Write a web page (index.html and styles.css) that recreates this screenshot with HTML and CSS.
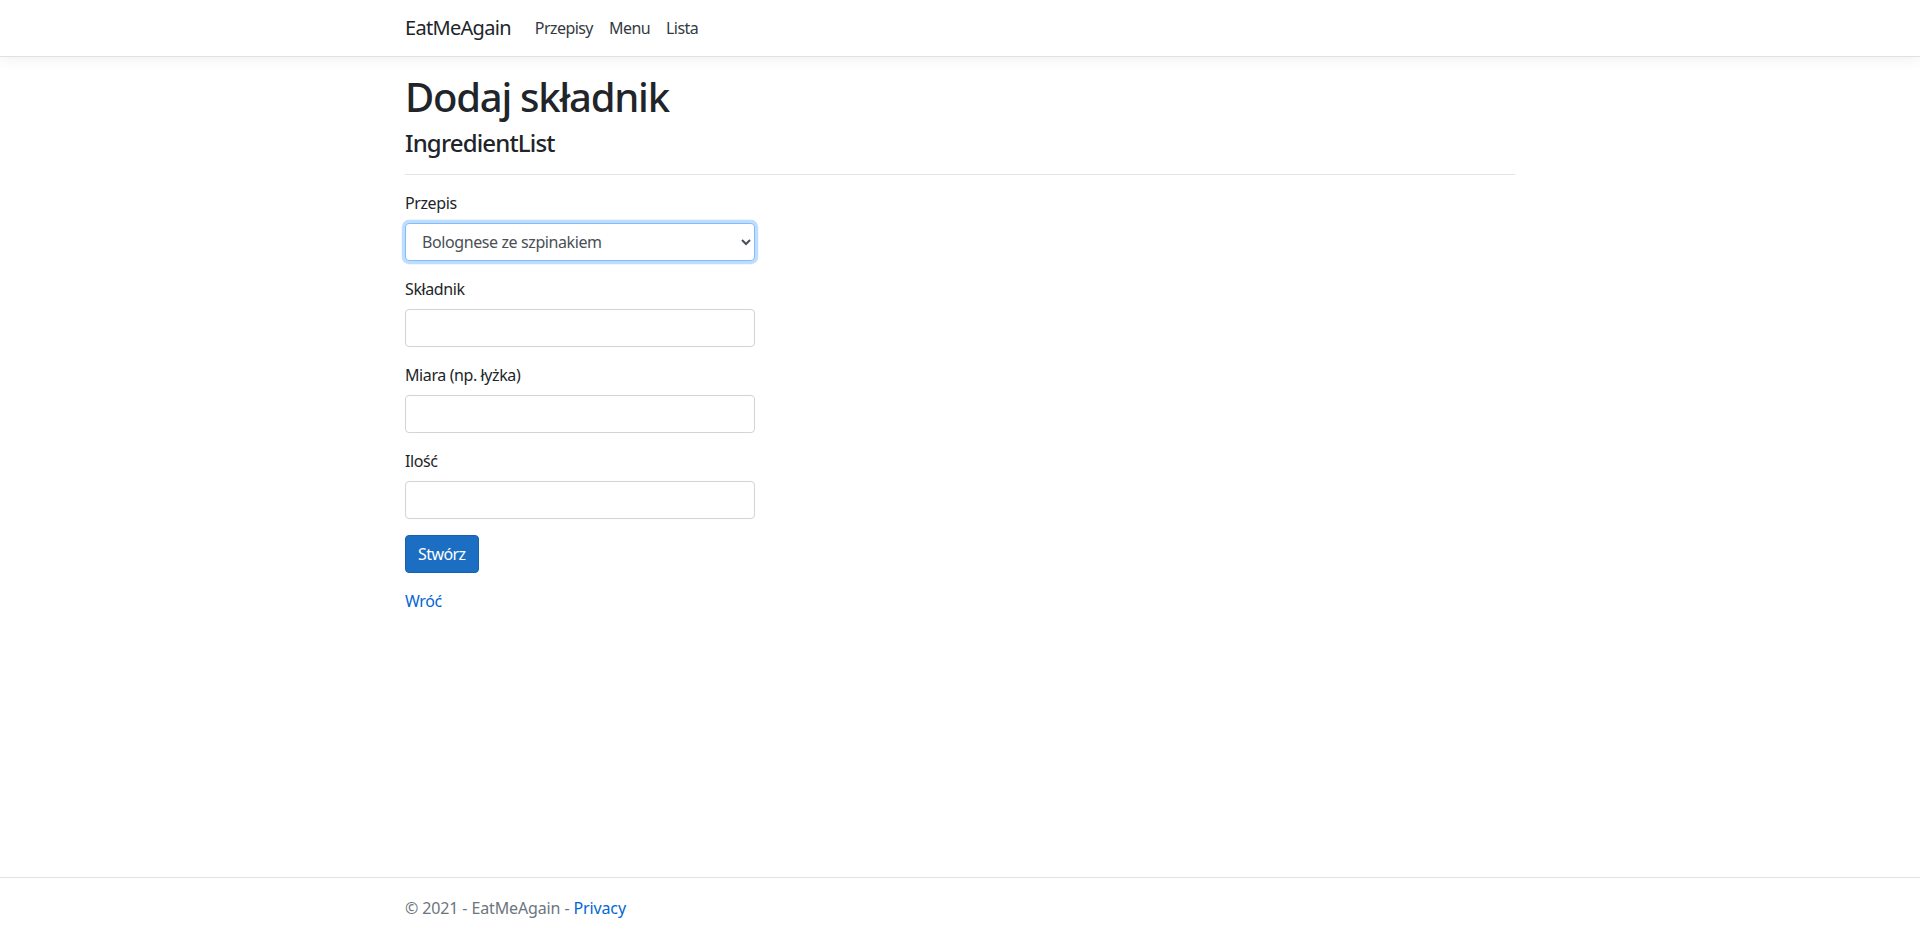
FILE: index.html
```html
<!DOCTYPE html>
<html lang="pl">
<head>
<meta charset="utf-8">
<title>Dodaj składnik - EatMeAgain</title>
<link rel="stylesheet" href="styles.css">
</head>
<body>
<header>
  <nav class="navbar">
    <div class="container nav-inner">
      <a class="navbar-brand" href="#">EatMeAgain</a>
      <ul class="navbar-nav">
        <li><a class="nav-link" href="#">Przepisy</a></li>
        <li><a class="nav-link" href="#">Menu</a></li>
        <li><a class="nav-link" href="#">Lista</a></li>
      </ul>
    </div>
  </nav>
</header>
<div class="container">
  <main class="main">
    <h1>Dodaj składnik</h1>
    <h4>IngredientList</h4>
    <hr>
    <div class="row">
      <div class="col">
        <form>
          <div class="form-group">
            <label class="label" for="recipe">Przepis</label>
            <select id="recipe" class="form-control focused">
              <option>Bolognese ze szpinakiem</option>
            </select>
          </div>
          <div class="form-group">
            <label class="label" for="name">Składnik</label>
            <input id="name" class="form-control" type="text">
          </div>
          <div class="form-group">
            <label class="label" for="measure">Miara (np. łyżka)</label>
            <input id="measure" class="form-control" type="text">
          </div>
          <div class="form-group">
            <label class="label" for="qty">Ilość</label>
            <input id="qty" class="form-control" type="text">
          </div>
          <div class="form-group">
            <button type="button" class="btn btn-primary">Stwórz</button>
          </div>
        </form>
      </div>
    </div>
    <div>
      <a class="link" href="#">Wróć</a>
    </div>
  </main>
</div>
<footer class="footer">
  <div class="container">
    &copy; 2021 - EatMeAgain - <a class="link" href="#">Privacy</a>
  </div>
</footer>
</body>
</html>
```
FILE: styles.css
```css
* { box-sizing: border-box; }
html { font-size: 16px; position: relative; min-height: calc(100% + 2px); }
body {
  margin: 0;
  margin-bottom: 60px;
  font-family: "Noto Sans", "Open Sans", "Liberation Sans", sans-serif;
  font-size: 1rem;
  line-height: 1.5;
  letter-spacing: -0.025em;
  color: #212529;
  background: #fff;
}
a { text-decoration: none; }
.container {
  width: 100%;
  max-width: 1140px;
  margin: 0 auto;
  padding: 0 15px;
}
.navbar {
  background: #fff;
  border-bottom: 1px solid #dee2e6;
  box-shadow: 0 .25rem .75rem rgba(0,0,0,.05);
  padding: .5rem 0;
  margin-bottom: 1rem;
}
.nav-inner {
  display: flex;
  align-items: center;
}
.navbar-brand {
  color: #212529;
  font-size: 1.25rem;
  line-height: 1.5;
  letter-spacing: -0.035em;
  padding: .3125rem 0;
  margin-right: 1rem;
}
.navbar-nav {
  display: flex;
  list-style: none;
  margin: 0;
  padding: 0;
}
.nav-link {
  display: block;
  color: #343a40;
  padding: .5rem;
  letter-spacing: -0.035em;
}
.main { padding-bottom: 1rem; }
h1 {
  font-size: 2.5rem;
  font-weight: 500;
  line-height: 1.2;
  letter-spacing: -0.031em;
  margin: 0 0 .5rem;
}
h4 {
  font-size: 1.5rem;
  font-weight: 500;
  line-height: 1.2;
  letter-spacing: -0.035em;
  margin: 0 0 .5rem;
}
hr {
  border: 0;
  border-top: 1px solid rgba(0,0,0,.1);
  margin: 1rem 0;
}
.row { display: flex; margin: 0 -15px; }
.col { width: 33.333333%; padding: 0 15px; }
.form-group { margin-bottom: 1rem; }
.label { display: inline-block; margin-bottom: .5rem; }
.form-control {
  display: block;
  width: 100%;
  height: 38px;
  padding: .375rem .75rem;
  font-family: inherit;
  font-size: 1rem;
  line-height: 1.5;
  letter-spacing: inherit;
  color: #495057;
  background: #fff;
  border: 1px solid #ced4da;
  border-radius: .25rem;
  margin: 0;
}
.focused {
  border-color: #80bdff;
  box-shadow: 0 0 0 .2rem rgba(0,123,255,.25);
  outline: 0;
}
.btn {
  display: inline-block;
  font-family: inherit;
  font-size: 1rem;
  line-height: 1.5;
  letter-spacing: -0.035em;
  padding: .375rem .75rem;
  border: 1px solid transparent;
  border-radius: .25rem;
  cursor: pointer;
}
.btn-primary {
  color: #fff;
  background: #1b6ec2;
  border-color: #1861ac;
}
.link { color: #0366d6; }
.footer {
  position: absolute;
  bottom: 0;
  width: 100%;
  white-space: nowrap;
  line-height: 60px;
  letter-spacing: -0.008em;
  border-top: 1px solid #dee2e6;
  color: #6c757d;
}
```
